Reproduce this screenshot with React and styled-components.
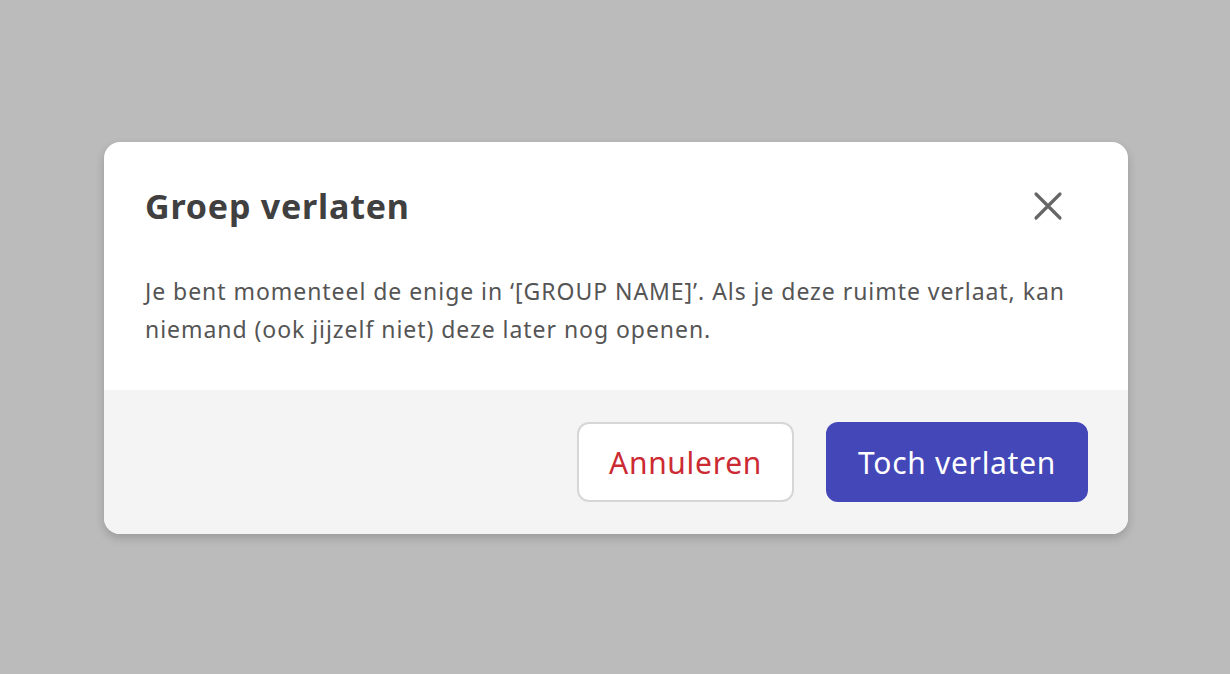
import React from 'react';
import styled, { createGlobalStyle } from 'styled-components';

const GlobalStyle = createGlobalStyle`
    html, body {
        margin: 0;
        padding: 0;
        height: 100%;
        background: #bbbbbb;
    }
    #root {
        height: 100%;
    }
    * {
        box-sizing: border-box;
    }
`;

const Overlay = styled.div`
    display: flex;
    align-items: center;
    justify-content: center;
    width: 100vw;
    height: 100vh;
    padding: 2px 0 0 2px;
    background-color: #bbbbbb;
    font-family: 'Noto Sans', 'Open Sans', sans-serif;
`;

const Dialog = styled.div`
    display: flex;
    flex-direction: column;
    width: 1024px;
    border-radius: 16px;
    background: #fff;
    overflow: hidden;
    box-shadow: 0 4px 10px rgba(0, 0, 0, 0.18);
`;

const Body = styled.div`
    padding: 40px 41px 42px 41px;
`;

const Header = styled.div`
    display: flex;
    align-items: center;
    justify-content: space-between;
`;

const Title = styled.h2`
    margin: 0;
    font-size: 34px;
    line-height: 48px;
    font-weight: 700;
    letter-spacing: 0.8px;
    color: #404040;
`;

const CloseButton = styled.button`
    display: flex;
    align-items: center;
    justify-content: center;
    width: 48px;
    height: 48px;
    margin-right: 15px;
    padding: 0;
    border: none;
    background: none;
    cursor: pointer;
`;

const Message = styled.p`
    margin: 42px 0 0 0;
    font-size: 23px;
    line-height: 38px;
    letter-spacing: 0.95px;
    color: #555555;
`;

const Footer = styled.div`
    display: flex;
    justify-content: flex-end;
    gap: 32px;
    padding: 32px 40px;
    background: #f4f4f4;
`;

const Button = styled.button`
    height: 80px;
    padding: 0 30px;
    border-radius: 12px;
    font-family: inherit;
    font-size: 30px;
    font-weight: 400;
    letter-spacing: 0.7px;
    cursor: pointer;
    border: 2px solid ${p => (p.$primary ? '#4447b8' : '#d6d6d6')};
    background: ${p => (p.$primary ? '#4447b8' : '#ffffff')};
    color: ${p => (p.$primary ? '#ffffff' : '#cc2a33')};
`;

const App = () => {
    return (
        <>
            <GlobalStyle />
            <Overlay>
                <Dialog>
                    <Body>
                        <Header>
                            <Title>Groep verlaten</Title>
                            <CloseButton aria-label="Sluiten">
                                <svg width="30" height="30" viewBox="0 0 30 30">
                                    <path d="M3 3 L27 27 M27 3 L3 27" stroke="#666666" strokeWidth="3.2" strokeLinecap="round" />
                                </svg>
                            </CloseButton>
                        </Header>
                        <Message>
                            Je bent momenteel de enige in ‘[GROUP NAME]’. Als je deze ruimte verlaat, kan niemand (ook jijzelf niet) deze later nog openen.
                        </Message>
                    </Body>
                    <Footer>
                        <Button>Annuleren</Button>
                        <Button $primary>Toch verlaten</Button>
                    </Footer>
                </Dialog>
            </Overlay>
        </>
    );
};

export default App;
